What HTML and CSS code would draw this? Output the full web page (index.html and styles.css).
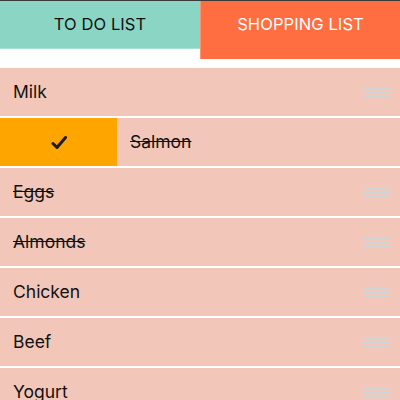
FILE: index.html
```html
<!DOCTYPE html>
<html>
<head>
<meta charset="utf-8">
<link rel="stylesheet" href="styles.css">
</head>
<body>
<div class="topline"></div>
<div class="tabs">
  <div class="tab todo">TO DO LIST</div>
  <div class="tab shop">SHOPPING LIST</div>
</div>
<div class="list">
  <div class="row">
    <div class="item"><span class="label">Milk</span><svg class="handle" width="26" height="11" viewBox="0 0 26 11"><path d="M0 1.5H26M0 5.5H26M0 9.5H26" stroke="#d0d4d4" stroke-width="1.4"/></svg></div>
  </div>
  <div class="row">
    <div class="action">
      <svg width="16" height="15" viewBox="0 0 16 15"><path d="M2 8.5 L6 12.5 L14.5 2.5" fill="none" stroke="#1c1c1c" stroke-width="3" stroke-linecap="round" stroke-linejoin="round"/></svg>
    </div>
    <div class="item"><span class="label done">Salmon</span><svg class="handle" width="26" height="11" viewBox="0 0 26 11"><path d="M0 1.5H26M0 5.5H26M0 9.5H26" stroke="#d0d4d4" stroke-width="1.4"/></svg></div>
  </div>
  <div class="row">
    <div class="item"><span class="label done">Eggs</span><svg class="handle" width="26" height="11" viewBox="0 0 26 11"><path d="M0 1.5H26M0 5.5H26M0 9.5H26" stroke="#d0d4d4" stroke-width="1.4"/></svg></div>
  </div>
  <div class="row">
    <div class="item"><span class="label done">Almonds</span><svg class="handle" width="26" height="11" viewBox="0 0 26 11"><path d="M0 1.5H26M0 5.5H26M0 9.5H26" stroke="#d0d4d4" stroke-width="1.4"/></svg></div>
  </div>
  <div class="row">
    <div class="item"><span class="label">Chicken</span><svg class="handle" width="26" height="11" viewBox="0 0 26 11"><path d="M0 1.5H26M0 5.5H26M0 9.5H26" stroke="#d0d4d4" stroke-width="1.4"/></svg></div>
  </div>
  <div class="row">
    <div class="item"><span class="label">Beef</span><svg class="handle" width="26" height="11" viewBox="0 0 26 11"><path d="M0 1.5H26M0 5.5H26M0 9.5H26" stroke="#d0d4d4" stroke-width="1.4"/></svg></div>
  </div>
  <div class="row">
    <div class="item"><span class="label">Yogurt</span><svg class="handle" width="26" height="11" viewBox="0 0 26 11"><path d="M0 1.5H26M0 5.5H26M0 9.5H26" stroke="#d0d4d4" stroke-width="1.4"/></svg></div>
  </div>
</div>
</body>
</html>
```
FILE: styles.css
```css
html, body {
  margin: 0;
  padding: 0;
  background: #ffffff;
  font-family: Inter, "Noto Sans", sans-serif;
  overflow: hidden;
}
.topline {
  height: 1px;
  background: #3a3a3a;
}
.tabs {
  display: flex;
  align-items: flex-start;
}
.tab {
  font-size: 16.5px;
  line-height: 47px;
  text-align: center;
  letter-spacing: 0.1px;
}
.todo {
  width: 200px;
  height: 47px;
  background: #8bd5c5;
  color: #111;
  border-bottom: 1px solid #a9e1d5;
}
.shop {
  flex: 1;
  height: 58px;
  background: #ff6e40;
  color: #ffffff;
  border-left: 1px solid #ff9270;
}
.list {
  margin-top: 9px;
}
.row {
  display: flex;
  height: 48px;
  border-bottom: 2px solid #ffffff;
  background: #f2c7ba;
  overflow: hidden;
}
.action {
  flex: none;
  width: 117px;
  background: #ffa500;
  display: flex;
  align-items: center;
  justify-content: center;
}
.item {
  flex: none;
  width: 400px;
  height: 48px;
  display: flex;
  align-items: center;
  justify-content: space-between;
  padding: 0 11px 0 13px;
  box-sizing: border-box;
}
.label {
  font-size: 17.5px;
  line-height: 22px;
  color: #111;
}
.done {
  text-decoration: line-through;
}
.handle {
  display: block;
  flex: none;
}
```
